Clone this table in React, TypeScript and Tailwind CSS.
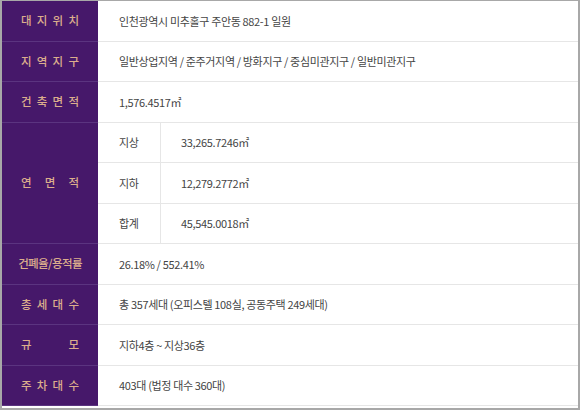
const FONT = "font-['Noto_Sans_CJK_KR','Noto_Sans',sans-serif]";

type Row = { label: string[]; value: string };

const TOP: Row[] = [
  { label: ["대", "지", "위", "치"], value: "인천광역시 미추홀구 주안동 882-1 일원" },
  { label: ["지", "역", "지", "구"], value: "일반상업지역 / 준주거지역 / 방화지구 / 중심미관지구 / 일반미관지구" },
  { label: ["건", "축", "면", "적"], value: "1,576.4517㎡" },
];

const BOTTOM: Row[] = [
  { label: ["건폐율/용적률"], value: "26.18% / 552.41%" },
  { label: ["총", "세", "대", "수"], value: "총 357세대 (오피스텔 108실, 공동주택 249세대)" },
  { label: ["규", "모"], value: "지하4층 ~ 지상36층" },
  { label: ["주", "차", "대", "수"], value: "403대 (법정 대수 360대)" },
];

const AREA = [
  ["지상", "33,265.7246㎡"],
  ["지하", "12,279.2772㎡"],
  ["합계", "45,545.0018㎡"],
];

function Label({ parts }: { parts: string[] }) {
  return (
    <div
      className={`w-[96px] shrink-0 bg-[#46186a] border-b border-[#5b3480] flex items-center px-[19px] text-[11.5px] font-medium text-[#dcae8c] whitespace-nowrap ${
        parts.length > 1 ? "justify-between" : "justify-center tracking-[-0.6px]"
      }`}
    >
      {parts.map((p, i) => (
        <span key={i}>{p}</span>
      ))}
    </div>
  );
}

function Line({ row }: { row: Row }) {
  return (
    <div className="flex h-[40.5px]">
      <Label parts={row.label} />
      <div className="flex-1 flex items-center pl-[21px] border-b border-[#e6e6e6] text-[11px] text-[#444] tracking-[-0.35px]">
        {row.value}
      </div>
    </div>
  );
}

export default function App() {
  return (
    <div className={`w-[580px] h-[410px] bg-white border-2 border-[#a8a8a8] border-t-[1px] overflow-hidden ${FONT}`}>
      {TOP.map((r) => (
        <Line key={r.value} row={r} />
      ))}
      <div className="flex h-[121.5px]">
        <Label parts={["연", "면", "적"]} />
        <div className="flex-1 flex flex-col">
          {AREA.map(([k, v]) => (
            <div key={k} className="flex-1 flex border-b border-[#e6e6e6] text-[11px] text-[#444] tracking-[-0.35px]">
              <div className="w-[63px] border-r border-[#e6e6e6] flex items-center pl-[21px]">{k}</div>
              <div className="flex-1 flex items-center pl-[20px]">{v}</div>
            </div>
          ))}
        </div>
      </div>
      {BOTTOM.map((r) => (
        <Line key={r.value} row={r} />
      ))}
    </div>
  );
}
